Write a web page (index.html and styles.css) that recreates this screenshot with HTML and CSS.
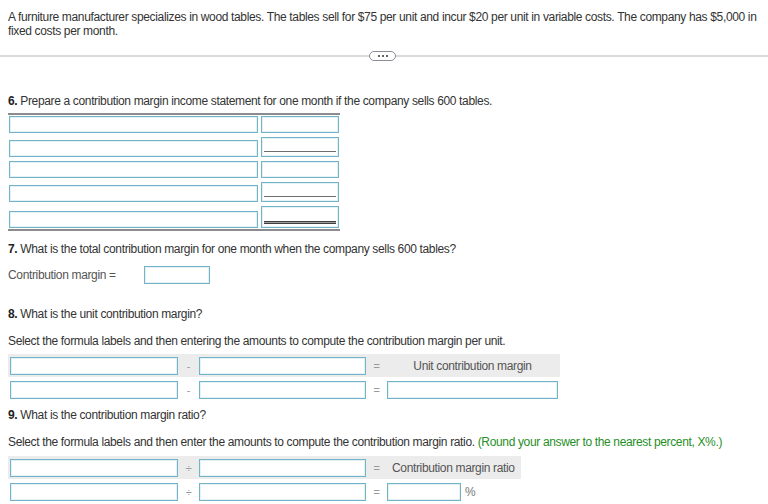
FILE: index.html
```html
<!DOCTYPE html>
<html>
<head>
<meta charset="utf-8">
<link rel="stylesheet" href="styles.css">
</head>
<body>
<p class="intro">A furniture manufacturer specializes in wood tables. The tables sell for $75 per unit and incur $20 per unit in variable costs. The company has $5,000 in fixed costs per month.</p>

<div class="divider"><span class="pill"><i></i><i></i><i></i></span></div>

<p class="q q6"><b>6.</b> Prepare a contribution margin income statement for one month if the company sells 600 tables.</p>

<div class="stmt">
  <div class="srow"><div class="inp lbl"></div><div class="inp amt"></div></div>
  <div class="srow"><div class="inp lbl"></div><div class="inp amt tall"><div class="rule"></div></div></div>
  <div class="srow"><div class="inp lbl"></div><div class="inp amt"></div></div>
  <div class="srow"><div class="inp lbl"></div><div class="inp amt tall"><div class="rule"></div></div></div>
  <div class="srow"><div class="inp lbl"></div><div class="inp amt taller"><div class="rule dbl"></div></div></div>
</div>

<p class="q q7"><b>7.</b> What is the total contribution margin for one month when the company sells 600 tables?</p>
<div class="cm-line"><span class="cm-label">Contribution margin =</span><div class="inp cm-inp"></div></div>

<p class="q q8"><b>8.</b> What is the unit contribution margin?</p>
<p class="q sel">Select the formula labels and then entering the amounts to compute the contribution margin per unit.</p>

<div class="formula f8">
  <div class="frow head">
    <div class="inp f1"></div><span class="op">-</span><div class="inp f2"></div><span class="op eq">=</span><span class="res center">Unit contribution margin</span>
  </div>
  <div class="frow">
    <div class="inp f1"></div><span class="op">-</span><div class="inp f2"></div><span class="op eq">=</span><div class="inp res-inp"></div>
  </div>
</div>

<p class="q q9"><b>9.</b> What is the contribution margin ratio?</p>
<p class="q sel">Select the formula labels and then enter the amounts to compute the contribution margin ratio. <span class="green">(Round your answer to the nearest percent, X%.)</span></p>

<div class="formula f9">
  <div class="frow head">
    <div class="inp f1"></div><span class="op">÷</span><div class="inp f2"></div><span class="op eq">=</span><span class="res left">Contribution margin ratio</span>
  </div>
  <div class="frow">
    <div class="inp f1"></div><span class="op">÷</span><div class="inp f2"></div><span class="op eq">=</span><div class="inp pct-inp"></div><span class="pct">%</span>
  </div>
</div>
</body>
</html>
```

FILE: styles.css
```css
html, body {
  margin: 0;
  padding: 0;
  background: #fff;
}
body {
  padding: 0 8px;
  font-family: "Liberation Sans", Arial, sans-serif;
  font-size: 12px;
  line-height: 14px;
  letter-spacing: -0.35px;
  color: #333;
}
p { margin: 0; }

.intro {
  padding-top: 10px;
}

.divider {
  position: relative;
  margin: 17px -8px 0;
  height: 2px;
  background: #d9d9de;
}
.pill {
  position: absolute;
  left: 369px;
  top: -4px;
  width: 25px;
  height: 8px;
  border: 1px solid #8a8d96;
  border-radius: 5px;
  background: #fff;
  display: flex;
  align-items: center;
  justify-content: center;
  gap: 2px;
}
.pill i {
  width: 2px;
  height: 2px;
  background: #666;
  display: block;
}

.q b { font-weight: bold; color: #222; }
.q6 { margin-top: 37px; }

.inp {
  box-sizing: border-box;
  border: 1px solid #72b3c8;
  background: #fff;
  box-shadow: inset 0 0 0 1px #e4f1f5;
}

.stmt {
  width: 332px;
  margin-top: 5px;
  border-top: 2px solid #8c8c8c;
  border-bottom: 2px solid #8c8c8c;
  padding: 1px 0 1px 1px;
  box-sizing: border-box;
}
.srow {
  display: flex;
  align-items: flex-end;
  gap: 3px;
  margin-top: 4px;
}
.srow:first-child { margin-top: 0; }
.lbl { width: 249px; height: 17px; }
.amt {
  width: 78px;
  height: 17px;
  display: flex;
  flex-direction: column;
  justify-content: flex-end;
  padding: 0 2px 4px;
}
.amt.tall { height: 20px; }
.amt.taller { height: 22px; padding-bottom: 3px; }
.rule { height: 1px; background: #6f6f6f; }
.rule.dbl { height: 3px; border-top: 1px solid #3f3f3f; border-bottom: 1px solid #3f3f3f; background: #9a9a9a; box-sizing: border-box; }

.q7 { margin-top: 11px; }
.cm-line {
  display: flex;
  align-items: center;
  margin-top: 10px;
  height: 18px;
}
.cm-label { color: #555; width: 136px; }
.cm-inp { width: 66px; height: 18px; }

.q8 { margin-top: 23px; }
.sel { margin-top: 13px; }

.formula { margin-top: 6px; }
.f9 { margin-top: 7px; }
.frow {
  display: flex;
  align-items: center;
  height: 20px;
  padding-left: 2px;
  margin-top: 3px;
}
.frow.head {
  background: #ececec;
  height: 23px;
  margin-top: 0;
}
.f8 .frow { width: 550px; }
.f9 .frow { width: 511px; }
.f1 { width: 168px; height: 18px; }
.f2 { width: 167px; height: 18px; }
.op {
  width: 21px;
  text-align: center;
  color: #999;
  font-size: 11px;
}
.eq { width: 21px; }
.res { color: #555; white-space: nowrap; }
.res.center { width: 171px; text-align: center; }
.res.left { padding-left: 5px; }
.res-inp { width: 171px; height: 18px; }
.pct-inp { width: 74px; height: 18px; }
.pct { color: #777; margin-left: 4px; }

.q9 { margin-top: 8px; }
.green { color: #1f8f1f; }
```
